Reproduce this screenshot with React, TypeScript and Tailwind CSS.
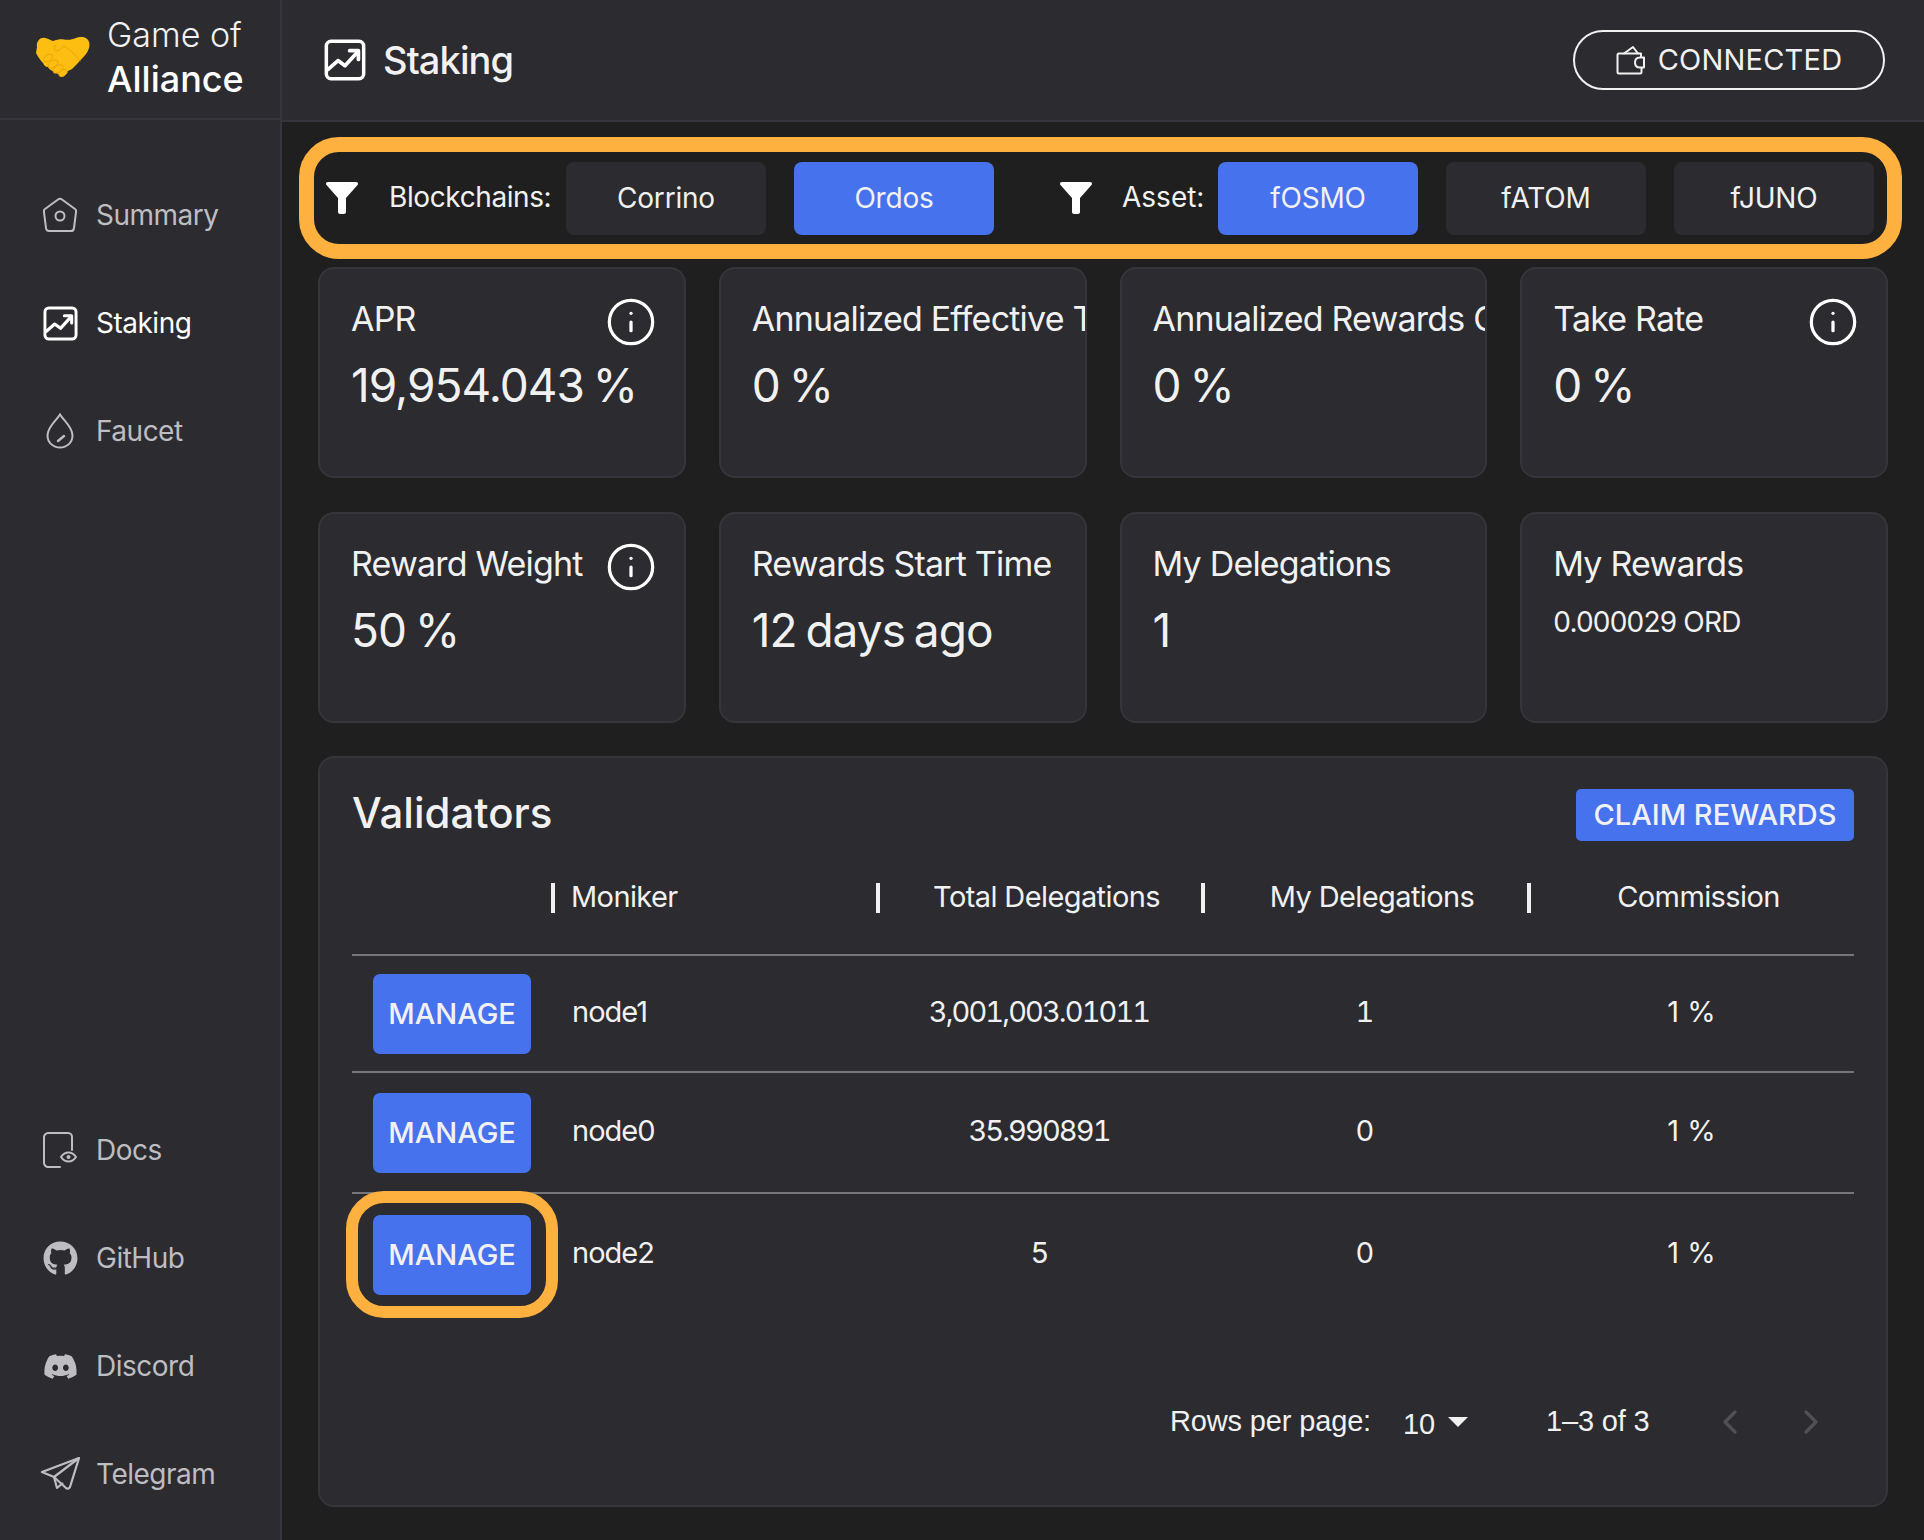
import { ChevronLeft, ChevronRight, Info } from "lucide-react";
import { FaDiscord, FaGithub } from "react-icons/fa";

const HandshakeLogo = () => (
  <svg viewBox="0 0 56 40" className="h-[40px] w-[56px]">
    <path
      d="M1 10C0 5 4 0 9 1c3 .5 5 2 8 3 4-1.5 8-2 11-1.5 5 .8 8 0 12-1.5 5-2 10-1 12 2 3 4 1 10-2 14-3 4-6 6-8 9l-6 6-4 2-3 2c-2 3-5 3-7 1-2-1-3-2-4-3-3 0-5-2-6-4-3 0-4-2-5-4-2-2-5-6-7-10z"
      fill="#fdbe12"
    />
    <g fill="#fdbe12" stroke="#e9a40a" strokeWidth="0.9">
      <ellipse cx="12" cy="21" rx="5" ry="3.2" transform="rotate(-35 12 21)" />
      <ellipse cx="17" cy="27" rx="5.6" ry="3.2" transform="rotate(-35 17 27)" />
      <ellipse cx="22" cy="32" rx="5.6" ry="3.2" transform="rotate(-35 22 32)" />
      <ellipse cx="27" cy="36" rx="4.6" ry="3" transform="rotate(-35 27 36)" />
    </g>
    <path d="M20 8c-3 3-2 6 1 6 3-1 5-3 7-5 5 3 12 9 16 15" fill="none" stroke="#e9a40a" strokeWidth="1" strokeLinecap="round" />
  </svg>
);

const ChartIcon = ({ className }: { className: string }) => (
  <svg viewBox="0 0 36 36" className={className} fill="none" stroke="currentColor" strokeLinejoin="round" strokeLinecap="round">
    <rect x="2" y="2" width="32" height="32" rx="4" strokeWidth="3" />
    <path d="M3.5 26l8.5-7.5 6 4.5 10-11" strokeWidth="3.2" />
    <path d="M22 10h7.5v7.5" strokeWidth="3.2" />
  </svg>
);

const HomeIcon = () => (
  <svg viewBox="0 0 36 36" className="h-[36px] w-[36px]" fill="none" stroke="currentColor" strokeWidth="2" strokeLinejoin="round">
    <path d="M16 2.5c1.2-.9 2.8-.9 4 0L33 12c.8.6 1.2 1.5 1.1 2.5L32 31c-.2 1.6-1.5 3-3 3H7c-1.5 0-2.8-1.4-3-3L1.9 14.5C1.8 13.5 2.2 12.6 3 12z" />
    <circle cx="18" cy="19" r="4.5" />
  </svg>
);

const DropIcon = () => (
  <svg viewBox="0 0 28 36" className="h-[36px] w-[28px]" fill="none" stroke="currentColor" strokeWidth="2" strokeLinecap="round">
    <path d="M14 1.5c3.5 6 12.5 12 12.5 21C26.5 29.5 21 34.5 14 34.5S1.5 29.5 1.5 22.5c0-9 9-15 12.5-21z" />
    <path d="M12 28l6-5" strokeWidth="2.4" />
  </svg>
);

const DocsIcon = () => (
  <svg viewBox="0 0 34 36" className="h-[36px] w-[34px]" fill="none" stroke="currentColor" strokeWidth="2" strokeLinecap="round">
    <path d="M29 18V5c0-2-1.5-4-4-4H5C3 1 1 3 1 5v26c0 2 2 4 4 4h12" />
    <path d="M18 25c4-6 11-6 15 0-4 6-11 6-15 0z" />
    <circle cx="25.5" cy="25" r="2" fill="currentColor" stroke="none" />
  </svg>
);

const PlaneIcon = () => (
  <svg viewBox="0 0 40 34" className="h-[34px] w-[40px]" fill="none" stroke="currentColor" strokeWidth="2.2" strokeLinejoin="round">
    <path d="M39 1L2 15l12 5 12 11c1 1 3 1 4-1z" />
    <path d="M39 1L14 20l3 11 6-5" />
  </svg>
);

const FunnelIcon = () => (
  <svg viewBox="0 0 32 32" className="h-[32px] w-[32px]" fill="#ffffff">
    <path d="M2 0h28c2 0 2.5 2 1.5 3L20 16v14c0 1-1 2-2 2h-4c-1 0-2-1-2-2V16L.5 3C-.5 2 0 0 2 0z" />
  </svg>
);

const WalletIcon = () => (
  <svg viewBox="0 0 30 30" className="h-[30px] w-[30px]" fill="none" stroke="currentColor" strokeWidth="2" strokeLinejoin="round" strokeLinecap="round">
    <path d="M25 12V8.5H3c-1 0-1.5.5-1.5 1.5v17c0 1 .5 1.5 1.5 1.5h21c1 0 1.5-.5 1.5-1.5v-4" />
    <path d="M8 8.5L17 2l5 6.5" />
    <path d="M24 12.5c-3 0-5 2-5 5s2 5 5 5h4v-10z" />
  </svg>
);

const topNav = [
  { label: "Summary", icon: <HomeIcon /> },
  { label: "Staking", icon: <ChartIcon className="h-[35px] w-[35px] text-white" />, active: true },
  { label: "Faucet", icon: <DropIcon /> },
];

const bottomNav = [
  { label: "Docs", icon: <DocsIcon /> },
  { label: "GitHub", icon: <FaGithub className="h-[35px] w-[35px]" /> },
  { label: "Discord", icon: <FaDiscord className="h-[35px] w-[35px]" /> },
  { label: "Telegram", icon: <PlaneIcon /> },
];

const stats = [
  { title: "APR", value: "19,954.043 %", info: true },
  { title: "Annualized Effective Take Rate", value: "0 %", toEdge: true },
  { title: "Annualized Rewards Commission", value: "0 %", toEdge: true },
  { title: "Take Rate", value: "0 %", info: true },
  { title: "Reward Weight", value: "50 %", info: true },
  { title: "Rewards Start Time", value: "12 days ago" },
  { title: "My Delegations", value: "1" },
  { title: "My Rewards", value: "0.000029 ORD", small: true },
];

const rows = [
  { name: "node1", total: "3,001,003.01011", mine: "1", height: "h-[117px]" },
  { name: "node0", total: "35.990891", mine: "0", height: "h-[121px]" },
  { name: "node2", total: "5", mine: "0", height: "h-[122px]", marked: true },
];

function NavItem({ label, icon, active }: { label: string; icon: React.ReactNode; active?: boolean }) {
  return (
    <div className={`flex h-[108px] items-center ${active ? "text-white" : "text-[#bdbdc2]"}`}>
      <div className="flex w-[96px] shrink-0 justify-center pl-[24px]">{icon}</div>
      <span className="text-[28px] leading-none tracking-[-0.5px]">{label}</span>
    </div>
  );
}

function FilterButton({ label, active }: { label: string; active?: boolean }) {
  return (
    <div
      className={`flex h-[73px] w-[200px] items-center justify-center rounded-[8px] text-[28px] tracking-[-0.2px] text-[#f1f1f1] ${
        active ? "bg-[#4772ee]" : "bg-[#2b2b30]"
      }`}
    >
      {label}
    </div>
  );
}

function StatCard({ title, value, info, toEdge, small }: (typeof stats)[number]) {
  return (
    <div className="h-[211px] overflow-hidden rounded-[16px] border-2 border-[#35353b] bg-[#2b2b30] pl-[31px] pt-[28px] pr-[31px]">
      <div className="flex h-[42px] items-center justify-between">
        <div className={`overflow-hidden whitespace-nowrap text-[34px] tracking-[-0.8px] text-[#f1f1f1] ${toEdge ? "-mr-[31px]" : ""}`}>{title}</div>
        {info && <Info className="-mr-[4px] h-[52px] w-[52px] shrink-0 translate-y-[4px] text-white" strokeWidth={1.5} />}
      </div>
      {small ? (
        <div className="mt-[20px] whitespace-nowrap text-[28px] leading-[36px] tracking-[-0.8px] text-[#f1f1f1]">{value}</div>
      ) : (
        <div className="mt-[18px] whitespace-nowrap text-[46px] leading-[56px] tracking-[-1px] [word-spacing:-3px] text-[#f1f1f1]">{value}</div>
      )}
    </div>
  );
}

function HeadCell({ label, center }: { label: string; center?: boolean }) {
  return (
    <div className={`flex h-[30px] items-center border-l-[4px] border-[#f1f1f1] text-[29px] tracking-[-0.6px] ${center ? "justify-center pl-[12px]" : "pl-[16px]"}`}>
      <span className="-translate-y-[2px] leading-none">{label}</span>
    </div>
  );
}

export default function App() {
  return (
    <div className="flex h-[1540px] w-[1924px] overflow-hidden bg-[#1f1f1f] text-[#f1f1f1] [font-family:Inter,sans-serif]">
      <aside className="flex w-[282px] shrink-0 flex-col border-r-2 border-[#35353b] bg-[#2b2b30]">
        <div className="flex h-[120px] shrink-0 items-center gap-[15px] border-b-2 border-[#35353b] pb-[4px] pl-[36px]">
          <HandshakeLogo />
          <div className="flex flex-col">
            <span className="text-[34px] font-light leading-[44px]">Game of</span>
            <span className="text-[36px] font-medium leading-[44px] text-white">Alliance</span>
          </div>
        </div>
        <nav className="mt-[41px] flex flex-1 flex-col justify-between pb-[12px]">
          <div>
            {topNav.map((item) => (
              <NavItem key={item.label} {...item} />
            ))}
          </div>
          <div>
            {bottomNav.map((item) => (
              <NavItem key={item.label} {...item} />
            ))}
          </div>
        </nav>
      </aside>

      <main className="flex min-w-0 flex-1 flex-col">
        <header className="flex h-[122px] shrink-0 items-center justify-between border-b-2 border-[#35353b] bg-[#2b2b30] pl-[42px] pr-[39px]">
          <div className="flex items-center gap-[17px]">
            <ChartIcon className="h-[42px] w-[42px] text-white" />
            <h1 className="text-[38px] font-medium leading-none tracking-[-0.9px] text-[#f1f1f1]">Staking</h1>
          </div>
          <div className="flex h-[60px] w-[312px] items-center justify-center gap-[12px] rounded-full border-2 border-[#f1f1f1] text-[29px] tracking-[0.2px]">
            <WalletIcon />
            CONNECTED
          </div>
        </header>

        <div className="pl-[17px] pr-[22px] pt-[15px]">
          <div className="flex h-[122px] items-center rounded-[40px] border-[15px] border-[#feb13f] pl-[12px] pr-[13px]">
            <FunnelIcon />
            <span className="ml-[31px] w-[177px] -translate-y-[1px] text-[28px] tracking-[-0.4px]">Blockchains:</span>
            <div className="flex gap-[28px]">
              <FilterButton label="Corrino" />
              <FilterButton label="Ordos" active />
            </div>
            <div className="ml-[66px]">
              <FunnelIcon />
            </div>
            <span className="ml-[30px] w-[96px] -translate-y-[1px] text-[28px]">Asset:</span>
            <div className="flex gap-[28px]">
              <FilterButton label="fOSMO" active />
              <FilterButton label="fATOM" />
              <FilterButton label="fJUNO" />
            </div>
          </div>
        </div>

        <div className="px-[36px] pt-[8px]">
          <div className="grid grid-cols-4 gap-x-[33px] gap-y-[34px]">
            {stats.map((stat) => (
              <StatCard key={stat.title} {...stat} />
            ))}
          </div>

          <section className="mt-[33px] h-[751px] rounded-[16px] border-2 border-[#35353b] bg-[#2b2b30] pl-[32px] pr-[32px]">
            <div className="flex h-[110px] items-center justify-between">
              <h2 className="text-[42px] font-medium leading-none">Validators</h2>
              <div className="mt-[3px] flex h-[52px] w-[278px] items-center justify-center rounded-[5px] bg-[#4772ee] text-[29px] font-medium">CLAIM REWARDS</div>
            </div>

            <div className="grid h-[88px] grid-cols-[199px_325px_325px_326px_327px] items-start border-b-2 border-[#77777b] pt-[15px]">
              <div />
              <HeadCell label="Moniker" />
              <HeadCell label="Total Delegations" center />
              <HeadCell label="My Delegations" center />
              <HeadCell label="Commission" center />
            </div>

            {rows.map((row, i) => (
              <div
                key={row.name}
                className={`grid ${row.height} grid-cols-[199px_326px_326px_326px_325px] items-center text-[29px] ${
                  i < 2 ? "border-b-2 border-[#77777b]" : ""
                }`}
              >
                <div className="relative pl-[21px]">
                  <div className="flex h-[80px] w-[158px] items-center justify-center rounded-[7px] bg-[#4772ee] text-[29px] font-medium">MANAGE</div>
                  {row.marked && (
                    <div className="absolute left-[-6px] top-[-24px] h-[127px] w-[212px] rounded-[38px] border-[12px] border-[#feb13f]" />
                  )}
                </div>
                <div className="-translate-y-[2px] pl-[21px] tracking-[-1px]">{row.name}</div>
                <div className="-translate-y-[2px] pr-[2px] text-center tabular-nums tracking-[-1.9px]">{row.total}</div>
                <div className="-translate-y-[2px] pr-[2px] text-center tabular-nums">{row.mine}</div>
                <div className="-translate-y-[2px] text-center">1 %</div>
              </div>
            ))}

            <div className="mt-[86px] flex h-[40px] items-center text-[29px] tracking-[-0.15px] [font-family:'Liberation_Sans',sans-serif]">
              <span className="ml-[818px]">Rows per page:</span>
              <span className="ml-[32px] translate-y-[3px]">10</span>
              <svg viewBox="0 0 20 10" className="ml-[13px] h-[10px] w-[20px] fill-[#f1f1f1]">
                <path d="M0 0h20L10 10z" />
              </svg>
              <span className="ml-[78px]">1–3 of 3</span>
              <ChevronLeft className="ml-[60px] h-[40px] w-[40px] text-[#505055]" strokeWidth={2} />
              <ChevronRight className="ml-[41px] h-[40px] w-[40px] text-[#505055]" strokeWidth={2} />
            </div>
          </section>
        </div>
      </main>
    </div>
  );
}
